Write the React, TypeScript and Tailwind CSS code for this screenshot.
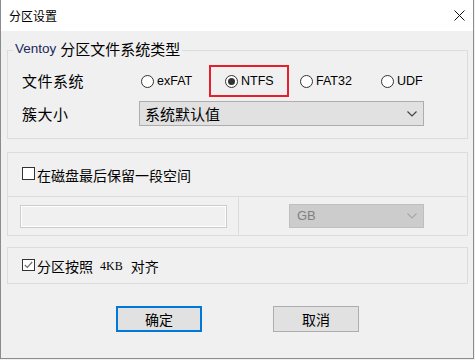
import React from "react";

const Radio = ({ checked, label }: { checked?: boolean; label: string }) => (
  <div className="flex items-center">
    <span className="w-[13px] h-[13px] rounded-full border border-[#333333] bg-white flex items-center justify-center shrink-0">
      {checked && <span className="w-[7px] h-[7px] rounded-full bg-[#333333]" />}
    </span>
    <span className="ml-[3px] text-[12.5px] leading-[16px] text-black font-['Liberation_Sans',sans-serif]">{label}</span>
  </div>
);

const Chevron = ({ color }: { color: string }) => (
  <svg width="10" height="6" viewBox="0 0 10 6" className="shrink-0">
    <path d="M0.5 0.5 L5 5 L9.5 0.5" fill="none" stroke={color} strokeWidth="1.2" />
  </svg>
);

export default function App() {
  return (
    <div className="w-[475px] h-[360px] bg-[#f0f0f0]">
      <div className="w-[474px] h-[359px] border-x border-b border-[#8c8c8c] bg-[#f0f0f0] flex flex-col font-['Noto_Sans_CJK_SC',sans-serif] text-black">
        {/* Title bar */}
        <div className="h-[31px] bg-white flex items-center justify-between pl-[8px] pr-[8px] shrink-0">
          <span className="text-[12px] leading-[16px]">分区设置</span>
          <svg width="11" height="11" viewBox="0 0 11 11">
            <path d="M0.5 0.5 L10.5 10.5 M10.5 0.5 L0.5 10.5" stroke="#111" strokeWidth="1" fill="none" />
          </svg>
        </div>

        {/* Group 1 */}
        <div className="relative ml-[6px] mt-[19px] w-[461px] h-[89px] border border-[#dcdcdc] shrink-0">
          <div className="absolute left-[5px] top-[-11px] px-[2px] bg-[#f0f0f0] flex items-center leading-[18px]">
            <span className="text-[13.5px] font-['Liberation_Sans',sans-serif] text-[#1a2a5a]">Ventoy</span>
            <span className="text-[15px] ml-[4px]">分区文件系统类型</span>
          </div>
          <div className="mt-[14px] h-[32px] flex items-center pl-[14px]">
            <span className="w-[119px] text-[15px] leading-[20px] tracking-[0.5px]">文件系统</span>
            <div className="w-[68px]">
              <Radio label="exFAT" />
            </div>
            <div className="w-[80px] h-[32px] border-2 border-[#e5202b] flex items-center pl-[14px]">
              <Radio checked label="NTFS" />
            </div>
            <div className="ml-[11px] w-[81px]">
              <Radio label="FAT32" />
            </div>
            <Radio label="UDF" />
          </div>
          <div className="mt-[4px] flex items-center pl-[14px]">
            <span className="w-[117px] text-[15px] leading-[20px] tracking-[0.5px]">簇大小</span>
            <div className="w-[285px] h-[25px] bg-[#e1e1e1] border border-[#adadad] flex items-center justify-between pl-[5px] pr-[6px]">
              <span className="text-[15px] leading-[20px]">系统默认值</span>
              <Chevron color="#444444" />
            </div>
          </div>
        </div>

        {/* Group 2 */}
        <div className="ml-[6px] mt-[13px] w-[461px] h-[84px] border border-[#dcdcdc] flex flex-col shrink-0">
          <div className="h-[44px] flex items-center pl-[14px] border-b border-[#dcdcdc]">
            <span className="w-[13px] h-[13px] border border-[#333333] bg-white shrink-0 -mt-[2px]" />
            <span className="ml-[2px] text-[14px] leading-[18px]">在磁盘最后保留一段空间</span>
          </div>
          <div className="flex flex-1">
            <div className="w-[231px] border-r border-[#dcdcdc] pl-[12px] pt-[8px]">
              <div className="w-[207px] h-[23px] border border-[#cccccc] bg-[#f0f0f0] shadow-[inset_0_0_0_1px_#ffffff]" />
            </div>
            <div className="flex-1 pl-[50px] pt-[7px]">
              <div className="w-[135px] h-[24px] bg-[#cccccc] border border-[#bfbfbf] flex items-center justify-between pl-[7px] pr-[6px]">
                <span className="text-[13px] leading-[16px] text-[#808080] font-['Liberation_Sans',sans-serif]">GB</span>
                <Chevron color="#a8a8a8" />
              </div>
            </div>
          </div>
        </div>

        {/* Group 3 */}
        <div className="ml-[6px] mt-[11px] w-[461px] h-[37px] border border-[#dcdcdc] flex items-center pl-[14px] shrink-0">
          <span className="w-[13px] h-[12px] border border-[#333333] bg-white shrink-0 flex items-center justify-center -mt-[1px]">
            <svg width="9" height="8" viewBox="0 0 9 8">
              <path d="M0.8 4 L3.3 6.5 L8.2 1" fill="none" stroke="#707070" strokeWidth="1.2" />
            </svg>
          </span>
          <span className="ml-[2px] text-[14px] leading-[18px]">分区按照</span>
          <span className="ml-[7px] text-[12px] leading-[18px] font-['Liberation_Serif',serif]">4KB</span>
          <span className="ml-[8px] text-[14px] leading-[18px]">对齐</span>
        </div>

        {/* Buttons */}
        <div className="mt-[22px] flex shrink-0">
          <div className="ml-[115px] w-[86px] h-[26px] border-2 border-[#0078d7] bg-[#e1e1e1] flex items-center justify-center text-[14px] leading-[18px]">
            确定
          </div>
          <div className="ml-[71px] w-[86px] h-[26px] border border-[#adadad] bg-[#e1e1e1] flex items-center justify-center text-[14px] leading-[18px]">
            取消
          </div>
        </div>
      </div>
    </div>
  );
}
